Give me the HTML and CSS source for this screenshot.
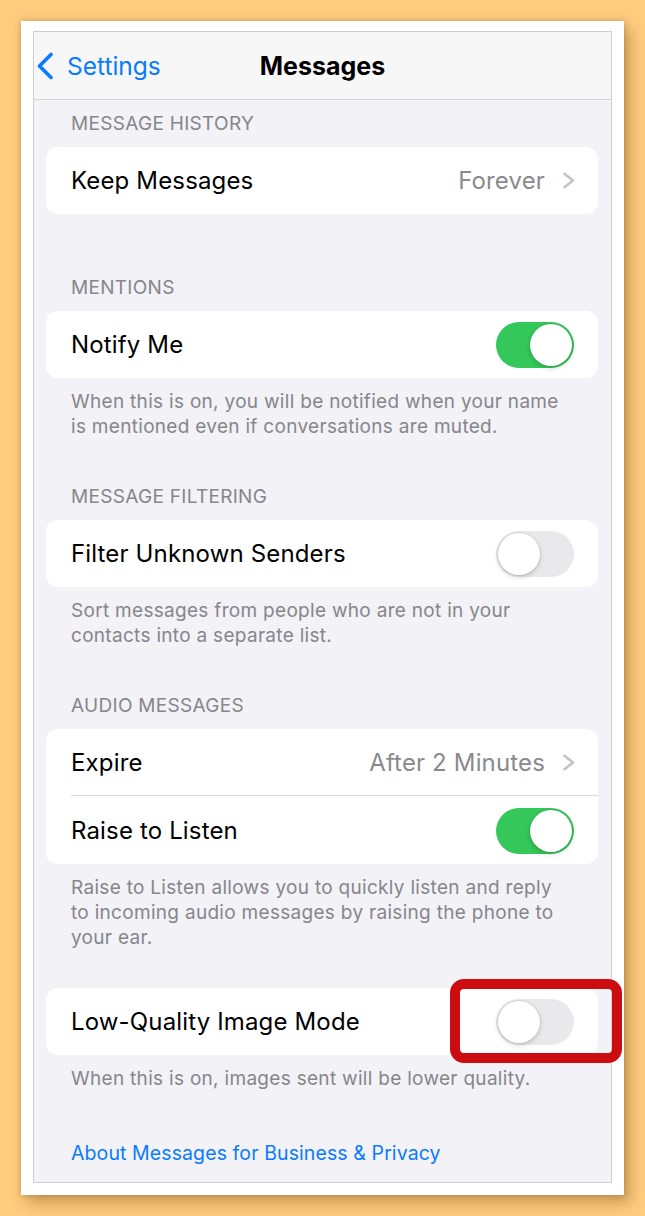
FILE: index.html
```html
<!DOCTYPE html>
<html>
<head>
<meta charset="utf-8">
<link rel="stylesheet" href="styles.css">
</head>
<body>
<div class="frame">
  <div class="screen">
    <div class="nav">
      <div class="back">
        <svg class="back-chev" width="18" height="28" viewBox="0 0 18 28"><path d="M15 2.5 L3.5 14 L15 25.5" fill="none" stroke="#0a7aff" stroke-width="3.6" stroke-linecap="round" stroke-linejoin="round"/></svg>
        <span>Settings</span>
      </div>
      <div class="title">Messages</div>
    </div>

    <div class="list">
      <div class="hdr s1">MESSAGE HISTORY</div>
      <div class="card">
        <div class="row">
          <span class="label">Keep Messages</span>
          <span class="value">Forever</span>
          <svg class="chev" width="14" height="17" viewBox="0 0 14 17"><path d="M2.5 1.8 L11 8.5 L2.5 15.2" fill="none" stroke="#c4c4c7" stroke-width="2.6" stroke-linecap="round" stroke-linejoin="round"/></svg>
        </div>
      </div>

      <div class="hdr s2">MENTIONS</div>
      <div class="card">
        <div class="row">
          <span class="label">Notify Me</span>
          <span class="toggle on"><span class="knob"></span></span>
        </div>
      </div>
      <div class="foot">When this is on, you will be notified when your name is mentioned even if conversations are muted.</div>

      <div class="hdr s3">MESSAGE FILTERING</div>
      <div class="card">
        <div class="row">
          <span class="label">Filter Unknown Senders</span>
          <span class="toggle"><span class="knob"></span></span>
        </div>
      </div>
      <div class="foot">Sort messages from people who are not in your contacts into a separate list.</div>

      <div class="hdr s3">AUDIO MESSAGES</div>
      <div class="card">
        <div class="row sep">
          <span class="label">Expire</span>
          <span class="value">After 2 Minutes</span>
          <svg class="chev" width="14" height="17" viewBox="0 0 14 17"><path d="M2.5 1.8 L11 8.5 L2.5 15.2" fill="none" stroke="#c4c4c7" stroke-width="2.6" stroke-linecap="round" stroke-linejoin="round"/></svg>
        </div>
        <div class="row">
          <span class="label">Raise to Listen</span>
          <span class="toggle on"><span class="knob"></span></span>
        </div>
      </div>
      <div class="foot">Raise to Listen allows you to quickly listen and reply to incoming audio messages by raising the phone to your ear.</div>

      <div class="card s5">
        <div class="row">
          <span class="label">Low-Quality Image Mode</span>
          <span class="toggle"><span class="knob"></span></span>
        </div>
      </div>
      <div class="foot">When this is on, images sent will be lower quality.</div>

      <div class="link">About Messages for Business &amp; Privacy</div>
    </div>
  </div>
  <div class="highlight"></div>
</div>
</body>
</html>
```
FILE: styles.css
```css
html, body {
  margin: 0;
  padding: 0;
}
body {
  background: #fecb7f;
  width: 645px;
  height: 1216px;
  overflow: hidden;
  font-family: Inter, "Liberation Sans", sans-serif;
}
.frame {
  position: relative;
  margin: 21px 0 0 21px;
  width: 579px;
  height: 1152px;
  padding: 10px 12px 12px 12px;
  background: #fff;
  box-shadow: 0 0 6px rgba(120, 80, 20, 0.35), 6px 8px 14px rgba(110, 70, 10, 0.35);
}
.screen {
  height: 1150px;
  border: 1px solid #cfcfd3;
  background: #f2f2f7;
  overflow: hidden;
}
.nav {
  position: relative;
  height: 67px;
  background: #f7f7f7;
  border-bottom: 1px solid #d6d6d9;
  display: flex;
  align-items: center;
  justify-content: center;
}
.back {
  position: absolute;
  left: 2px;
  top: 0;
  height: 67px;
  display: flex;
  align-items: center;
  gap: 13px;
  color: #0a7aff;
  font-size: 24.5px;
}
.back-chev {
  margin-top: 1px;
}
.title {
  font-size: 25px;
  font-weight: 700;
  color: #000;
  letter-spacing: 0;
}
.list {
  padding: 0 13px 0 12px;
}
.hdr {
  padding: 0 25px;
  font-size: 19px;
  line-height: 24px;
  color: #86868b;
  margin-bottom: 11px;
  letter-spacing: 0.3px;
}
.s1 { margin-top: 12px; }
.s2 { margin-top: 62px; }
.s3 { margin-top: 46px; }
.s5 { margin-top: 38px; }
.card {
  background: #fff;
  border-radius: 12px;
  overflow: hidden;
}
.row {
  height: 67px;
  display: flex;
  align-items: center;
  padding: 0 24px 0 25px;
  position: relative;
}
.row.sep::after {
  content: "";
  position: absolute;
  left: 25px;
  right: 0;
  bottom: 0;
  height: 1px;
  background: #dcdce0;
}
.row.sep {
  height: 67px;
  border-bottom: 1px solid transparent;
}
.label {
  flex: 1;
  font-size: 24px;
  color: #000;
  letter-spacing: 0.15px;
}
.value {
  font-size: 24px;
  color: #8a8a8e;
  margin-right: 17px;
  letter-spacing: 0.15px;
}
.chev {
  margin-right: -2px;
}
.toggle {
  width: 78px;
  height: 46px;
  border-radius: 23px;
  background: #e9e9eb;
  position: relative;
  flex: none;
}
.toggle.on {
  background: #34c759;
}
.knob {
  position: absolute;
  top: 2px;
  left: 2px;
  width: 42px;
  height: 42px;
  border-radius: 50%;
  background: #fff;
  box-shadow: 0 2px 5px rgba(0, 0, 0, 0.18), 0 0 0 1px rgba(0, 0, 0, 0.05);
}
.toggle.on .knob {
  left: 34px;
}
.foot {
  padding: 11px 25px 0;
  font-size: 19px;
  line-height: 25px;
  color: #86868b;
  letter-spacing: 0.3px;
}
.link {
  margin-top: 50px;
  padding: 0 25px;
  font-size: 19.5px;
  line-height: 25px;
  color: #0a7aff;
  letter-spacing: 0.1px;
}
.highlight {
  position: absolute;
  left: 429px;
  top: 958px;
  width: 152px;
  height: 64px;
  border: 10px solid #cc0d0f;
  border-radius: 14px;
}
```
